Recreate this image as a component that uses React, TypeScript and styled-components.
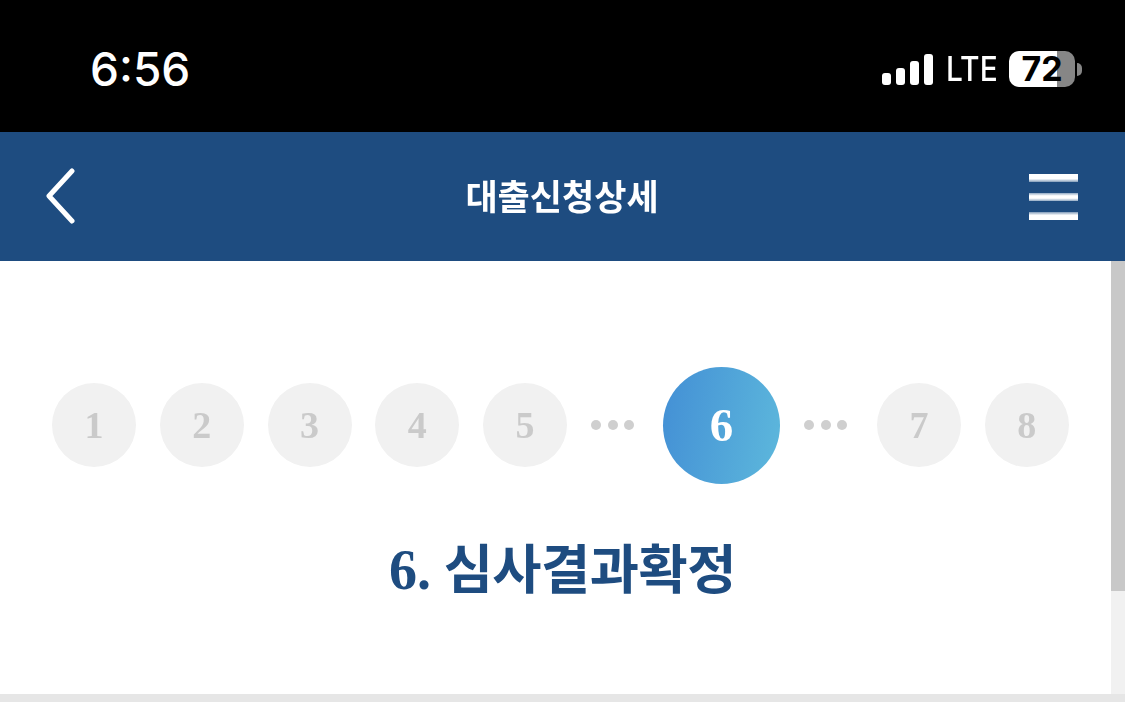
import React from 'react'
import styled, { createGlobalStyle } from 'styled-components'

const GlobalStyle = createGlobalStyle`
  html, body {
    margin: 0;
    padding: 0;
    background: #fff;
  }
  body {
    font-family: 'Noto Sans CJK KR', sans-serif;
  }
`

const Page = styled.div`
  width: 1125px;
  height: 702px;
  display: flex;
  flex-direction: column;
  overflow: hidden;
`

const StatusBar = styled.div`
  height: 132px;
  flex: none;
  background: #000;
  display: flex;
  align-items: center;
  justify-content: space-between;
  padding: 0 43px 0 90px;
  box-sizing: border-box;
  color: #fff;
`

const Time = styled.div`
  font-family: Inter, sans-serif;
  font-size: 46px;
  font-weight: 500;
  line-height: 1;
  margin-top: 6px;
`

const StatusRight = styled.div`
  display: flex;
  align-items: center;
  margin-top: 6px;
`

const Signal = styled.div`
  display: flex;
  align-items: flex-end;
  gap: 5px;
  height: 32px;
  margin-right: 13px;
`

const SignalBar = styled.span<{ $h: number }>`
  width: 9px;
  height: ${({ $h }) => $h}px;
  border-radius: 3px;
  background: #fff;
`

const Lte = styled.div`
  font-family: Inter, sans-serif;
  font-size: 34px;
  font-weight: 500;
  line-height: 1;
  transform: scaleX(0.88);
  transform-origin: left center;
  width: 52px;
  margin-right: 11px;
`

const Battery = styled.div`
  width: 66px;
  height: 36px;
  border-radius: 10px;
  background: linear-gradient(to right, #fff 0, #fff 48px, #868686 48px, #868686 100%);
  color: #000;
  display: flex;
  align-items: center;
  justify-content: center;
  font-family: Inter, sans-serif;
  font-size: 34px;
  font-weight: 700;
  line-height: 1;
`

const BatteryNub = styled.span`
  width: 5px;
  height: 13px;
  margin-left: 2px;
  border-radius: 0 7px 7px 0;
  background: #868686;
`

const Header = styled.header`
  height: 129px;
  flex: none;
  background: #1e4c80;
  display: flex;
  align-items: center;
  justify-content: space-between;
  padding: 0 47px 0 46px;
  box-sizing: border-box;
`

const BackIcon = styled.svg`
  width: 32px;
  height: 58px;
  display: block;
  filter: blur(0.5px);
`

const HeaderTitle = styled.h1`
  margin: 0 0 4px 17px;
  font-size: 35px;
  font-weight: 700;
  line-height: 1;
  color: #fff;
  filter: blur(0.4px);
`

const Menu = styled.div`
  display: flex;
  flex-direction: column;
  gap: 11px;
  width: 49px;
`

const MenuLine = styled.span<{ $fade: string }>`
  height: 8px;
  background: ${({ $fade }) => $fade};
`

const Body = styled.div`
  flex: 1;
  display: flex;
  min-height: 0;
`

const Content = styled.main`
  flex: 1;
  display: flex;
  flex-direction: column;
  align-items: flex-start;
  padding: 105px 0 0 52px;
  box-sizing: border-box;
`

const Steps = styled.div`
  display: flex;
  align-items: center;
  height: 118px;
  filter: blur(0.3px);
`

const Step = styled.div<{ $active?: boolean; $gap?: number }>`
  width: ${({ $active }) => ($active ? 117 : 84)}px;
  height: ${({ $active }) => ($active ? 117 : 84)}px;
  margin-right: ${({ $gap }) => $gap ?? 23.75}px;
  flex: none;
  border-radius: 50%;
  background: ${({ $active }) => ($active ? 'linear-gradient(100deg, #438fd5 0%, #5db8dc 100%)' : '#f1f1f1')};
  color: ${({ $active }) => ($active ? '#fff' : '#cacaca')};
  display: flex;
  align-items: center;
  justify-content: center;
  font-family: 'Liberation Serif', serif;
  font-size: ${({ $active }) => ($active ? 47 : 38)}px;
  font-weight: 700;
  line-height: 1;
`

const Dots = styled.div<{ $after: number }>`
  display: flex;
  gap: 6.5px;
  width: 44px;
  margin-left: 1px;
  margin-right: ${({ $after }) => $after}px;
`

const Dot = styled.span`
  width: 10px;
  height: 10px;
  border-radius: 50%;
  background: #cfcfcf;
  filter: blur(0.6px);
`

const Title = styled.h2`
  margin: 50px 0 0 337px;
  color: #1e4c80;
  font-size: 53.5px;
  font-weight: 700;
  line-height: 1.2;
  letter-spacing: -0.5px;
  white-space: nowrap;
  filter: blur(0.4px);
`

const TitleNumber = styled.span`
  font-family: 'Liberation Serif', serif;
  font-size: 56px;
  letter-spacing: 0;
  margin-right: 1px;
`

const Scrollbar = styled.div`
  width: 14px;
  flex: none;
  background: #f1f1f1;
`

const ScrollThumb = styled.div`
  height: 330px;
  background: #c8c8c8;
`

const BottomBar = styled.div`
  height: 8px;
  flex: none;
  background: #e6e6e6;
`

const App = () => (
  <Page>
    <GlobalStyle />
    <StatusBar>
      <Time>6:56</Time>
      <StatusRight>
        <Signal>
          <SignalBar $h={12} />
          <SignalBar $h={17} />
          <SignalBar $h={24} />
          <SignalBar $h={31} />
        </Signal>
        <Lte>LTE</Lte>
        <Battery>72</Battery>
        <BatteryNub />
      </StatusRight>
    </StatusBar>
    <Header>
      <BackIcon viewBox="0 0 32 58">
        <path d="M26 3 L3 28 L26 53" fill="none" stroke="#fff" strokeWidth="5" strokeLinecap="round" strokeLinejoin="round" />
      </BackIcon>
      <HeaderTitle>대출신청상세</HeaderTitle>
      <Menu>
        <MenuLine $fade="linear-gradient(#fff 0, #fff 60%, #7f9ab8 100%)" />
        <MenuLine $fade="linear-gradient(#8fa8c3 0, #fff 35%, #fff 65%, #8fa8c3 100%)" />
        <MenuLine $fade="linear-gradient(#7f9ab8 0, #fff 40%, #fff 100%)" />
      </Menu>
    </Header>
    <Body>
      <Content>
        <Steps>
          <Step>1</Step>
          <Step>2</Step>
          <Step>3</Step>
          <Step>4</Step>
          <Step $gap={23}>5</Step>
          <Dots $after={28}>
            <Dot />
            <Dot />
            <Dot />
          </Dots>
          <Step $active $gap={23}>6</Step>
          <Dots $after={29}>
            <Dot />
            <Dot />
            <Dot />
          </Dots>
          <Step>7</Step>
          <Step>8</Step>
        </Steps>
        <Title>
          <TitleNumber>6.</TitleNumber> 심사결과확정
        </Title>
      </Content>
      <Scrollbar>
        <ScrollThumb />
      </Scrollbar>
    </Body>
    <BottomBar />
  </Page>
)

export default App
